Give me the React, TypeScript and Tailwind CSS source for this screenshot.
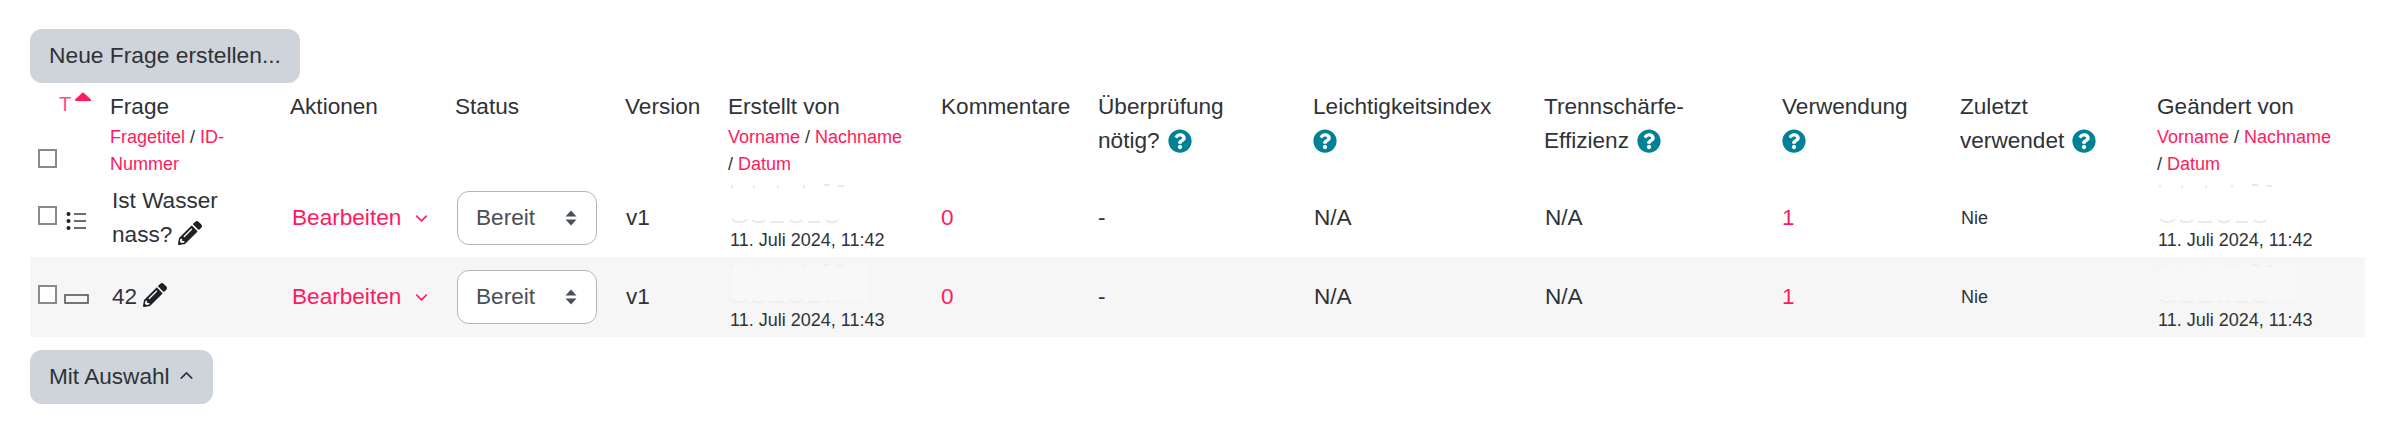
import React from "react";
import { FaPencilAlt, FaQuestionCircle } from "react-icons/fa";
import { ChevronDown, ChevronUp } from "lucide-react";

function Help({ first }: { first?: boolean }) {
  return <FaQuestionCircle className={first ? "inline-block w-[24px] h-[24px] align-[-5px] text-[#008196]" : "inline-block w-[24px] h-[24px] ml-[8px] align-[-5px] text-[#008196]"} />;
}

function Check() {
  return <span className="inline-block w-[19px] h-[19px] border-2 border-[#8a8a8a] bg-white shrink-0" />;
}

function Sub({ children }: { children: React.ReactNode }) {
  return <span className="text-[#ff1a5e]">{children}</span>;
}

function Smudge({ faint }: { faint?: boolean }) {
  return (
    <svg width="150" height="47" viewBox="0 0 150 47" className="block" fill="none" stroke={faint ? "#f0f0f0" : "#e9e9eb"} strokeWidth="2">
      {faint && <rect x="2" y="5" width="136" height="36" fill="#f8f8f8" stroke="none" />}
      <path d="M2 5v3M24 6v2M48 6v2M74 5v3M94 5h6M108 6h6" />
      <path d="M2 39c3 4 12 4 15 0M22 40c3 3 10 3 13 0M40 42h14M60 40c3 3 9 3 12 0M78 42h12M96 40c3 3 10 3 12 0" />
    </svg>
  );
}

function Arrows() {
  return (
    <svg width="12" height="16" viewBox="0 0 12 16" className="shrink-0" fill="#495057">
      <path d="M6 0.5 11.5 6.5H0.5Z" />
      <path d="M6 15.5 11.5 9.5H0.5Z" />
    </svg>
  );
}

function StatusSelect() {
  return (
    <div className="flex items-center justify-between w-[140px] h-[54px] ml-[2px] pl-[18px] pr-[19px] rounded-[12px] border border-[#b1b6bc] bg-white text-[#495057]">
      <span>Bereit</span>
      <Arrows />
    </div>
  );
}

function Row({ odd, title, icon, date }: { odd?: boolean; title: React.ReactNode; icon: React.ReactNode; date: string }) {
  const By = () => (
    <div className="flex flex-col justify-end pl-[2px]">
      <Smudge faint={odd} />
      <div className="text-[18px] leading-[27px] pb-[3px]">{date}</div>
    </div>
  );
  return (
    <tr className={odd ? "bg-[#f6f6f6] h-[80px]" : "h-[78px]"}>
      <td className="pl-[8px] align-middle">
        <div className={odd ? "flex items-start -mt-[5px]" : "flex items-start"}>
          <Check />
          {icon}
        </div>
      </td>
      <td className="pl-[10px] pr-[6px] align-middle">{title}</td>
      <td className="pl-[10px] align-middle">
        <span className="inline-flex items-center text-[#ff1a5e]">
          Bearbeiten
          <ChevronDown className="w-[19px] h-[19px] ml-[11px] mt-[1px]" strokeWidth={1.9} />
        </span>
      </td>
      <td className="pl-[8px] align-middle"><StatusSelect /></td>
      <td className="pl-[9px] align-middle">v1</td>
      <td className="pl-[8px] align-bottom"><By /></td>
      <td className="pl-[8px] align-middle text-[#ff1a5e]">0</td>
      <td className="pl-[8px] align-middle">-</td>
      <td className="pl-[9px] align-middle">N/A</td>
      <td className="pl-[9px] align-middle">N/A</td>
      <td className="pl-[8px] align-middle text-[#ff1a5e]">1</td>
      <td className="pl-[9px] pt-[2px] align-middle text-[18px]">Nie</td>
      <td className="pl-[7px] align-bottom"><By /></td>
    </tr>
  );
}

const th = "pl-[8px] pt-[6px] pb-0 font-normal text-left align-top";
const sub = "block text-[18px] leading-[27px]";

export default function App() {
  return (
    <div className="pl-[30px] pr-[35px] pt-[29px] bg-white min-h-[430px] text-[#2f3337] text-[22.6px] leading-[33.75px] font-['Liberation_Sans',Arial,sans-serif]">
      <button className="block h-[54px] w-[270px] rounded-[12px] bg-[#ced4da] text-left pl-[19px] text-[22.8px]">Neue Frage erstellen...</button>
      <table className="table-fixed w-[2335px] mt-px border-collapse">
        <colgroup>
          <col className="w-[72px]" />
          <col className="w-[180px]" />
          <col className="w-[165px]" />
          <col className="w-[170px]" />
          <col className="w-[103px]" />
          <col className="w-[213px]" />
          <col className="w-[157px]" />
          <col className="w-[215px]" />
          <col className="w-[231px]" />
          <col className="w-[238px]" />
          <col className="w-[178px]" />
          <col className="w-[197px]" />
          <col className="w-[216px]" />
        </colgroup>
        <thead>
          <tr className="h-[95px]">
            <th className="pl-[8px] font-normal text-left align-top">
              <div className="flex items-start h-[41px] pl-[21px] pt-[8px]">
                <span className="text-[#ff4d80] text-[20px] leading-[24px] font-light">T</span>
                <svg width="16" height="9" viewBox="0 0 16 9" className="ml-[4px]" fill="#ff1a5e" stroke="#ff1a5e" strokeWidth="2" strokeLinejoin="round">
                  <path d="M8 1.5 15 8H1Z" />
                </svg>
              </div>
              <div className="flex mt-[24px]"><Check /></div>
            </th>
            <th className={th}>
              Frage
              <span className={sub}><Sub>Fragetitel</Sub> / <Sub>ID-</Sub><br /><Sub>Nummer</Sub></span>
            </th>
            <th className={th}>Aktionen</th>
            <th className={th}>Status</th>
            <th className={th}>Version</th>
            <th className={th}>
              Erstellt von
              <span className={sub}><Sub>Vorname</Sub> / <Sub>Nachname</Sub><br />/ <Sub>Datum</Sub></span>
            </th>
            <th className={th}>Kommentare</th>
            <th className={th}>Überprüfung<br />nötig?<Help /></th>
            <th className={th}>Leichtigkeitsindex<br /><Help first /></th>
            <th className={th}>Trennschärfe-<br />Effizienz<Help /></th>
            <th className={th}>Verwendung<br /><Help first /></th>
            <th className={th}>Zuletzt<br />verwendet<Help /></th>
            <th className={th}>
              Geändert von
              <span className={sub}><Sub>Vorname</Sub> / <Sub>Nachname</Sub><br />/ <Sub>Datum</Sub></span>
            </th>
          </tr>
        </thead>
        <tbody>
          <Row
            title={<>Ist Wasser nass?<FaPencilAlt className="inline-block w-[24px] h-[24px] ml-[6px] align-[-3px] text-[#1d2125]" /></>}
            icon={
              <svg width="20" height="20" viewBox="0 0 20 20" fill="#1d2125" stroke="#3a3f44" className="shrink-0 ml-[9px] mt-[5px]">
                <circle cx="2.5" cy="3" r="2" stroke="none" />
                <circle cx="2.5" cy="10" r="2" stroke="none" />
                <circle cx="2.5" cy="17" r="2" stroke="none" />
                <path d="M8 3h12M8 10h12M8 17h12" strokeWidth="1.6" />
              </svg>
            }
            date="11. Juli 2024, 11:42"
          />
          <Row
            odd
            title={<>42<FaPencilAlt className="inline-block w-[24px] h-[24px] ml-[6px] align-[-3px] text-[#1d2125]" /></>}
            icon={
              <svg width="25" height="10" viewBox="0 0 25 10" fill="none" stroke="#555" strokeWidth="1.6" className="shrink-0 ml-[7px] mt-[9px]">
                <rect x="1" y="1" width="23" height="8" />
              </svg>
            }
            date="11. Juli 2024, 11:43"
          />
        </tbody>
      </table>
      <button className="flex items-center h-[54px] w-[183px] mt-[13px] rounded-[12px] bg-[#ced4da] pl-[19px]">
        Mit Auswahl
        <ChevronUp className="w-[21px] h-[21px] ml-[6px] -mt-[3px]" strokeWidth={1.9} />
      </button>
    </div>
  );
}
